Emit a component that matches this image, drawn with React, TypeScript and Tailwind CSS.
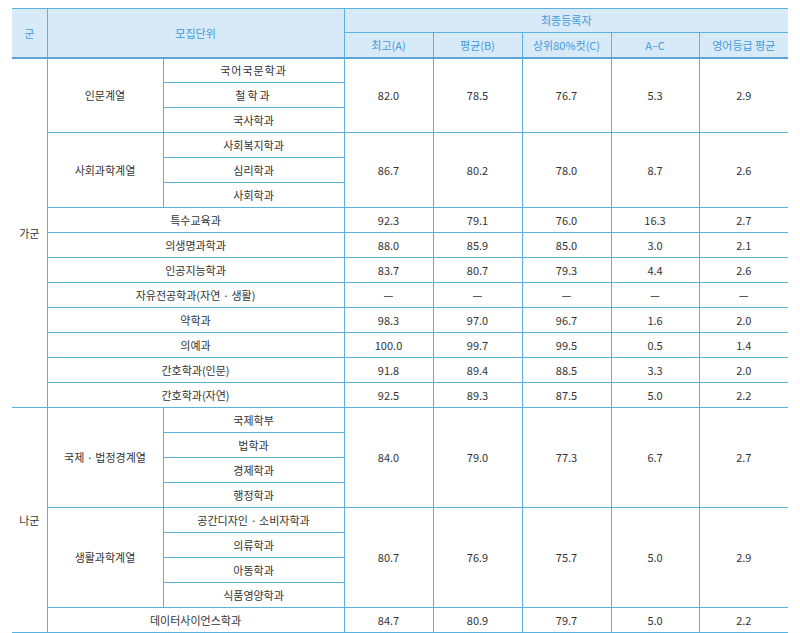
import React from "react";

type Sub = { name: string; track?: string };
type Block =
  | { kind: "group"; label: string; subs: Sub[]; vals: string[] }
  | { kind: "single"; label: string; vals: string[] };

const ga: Block[] = [
  {
    kind: "group",
    label: "인문계열",
    subs: [{ name: "국어국문학과", track: "tracking-[1px]" }, { name: "철학과", track: "tracking-[2px]" }, { name: "국사학과" }],
    vals: ["82.0", "78.5", "76.7", "5.3", "2.9"],
  },
  {
    kind: "group",
    label: "사회과학계열",
    subs: [{ name: "사회복지학과" }, { name: "심리학과" }, { name: "사회학과" }],
    vals: ["86.7", "80.2", "78.0", "8.7", "2.6"],
  },
  { kind: "single", label: "특수교육과", vals: ["92.3", "79.1", "76.0", "16.3", "2.7"] },
  { kind: "single", label: "의생명과학과", vals: ["88.0", "85.9", "85.0", "3.0", "2.1"] },
  { kind: "single", label: "인공지능학과", vals: ["83.7", "80.7", "79.3", "4.4", "2.6"] },
  { kind: "single", label: "자유전공학과(자연 · 생활)", vals: ["—", "—", "—", "—", "—"] },
  { kind: "single", label: "약학과", vals: ["98.3", "97.0", "96.7", "1.6", "2.0"] },
  { kind: "single", label: "의예과", vals: ["100.0", "99.7", "99.5", "0.5", "1.4"] },
  { kind: "single", label: "간호학과(인문)", vals: ["91.8", "89.4", "88.5", "3.3", "2.0"] },
  { kind: "single", label: "간호학과(자연)", vals: ["92.5", "89.3", "87.5", "5.0", "2.2"] },
];

const na: Block[] = [
  {
    kind: "group",
    label: "국제 · 법정경계열",
    subs: [{ name: "국제학부" }, { name: "법학과" }, { name: "경제학과" }, { name: "행정학과" }],
    vals: ["84.0", "79.0", "77.3", "6.7", "2.7"],
  },
  {
    kind: "group",
    label: "생활과학계열",
    subs: [{ name: "공간디자인 · 소비자학과" }, { name: "의류학과" }, { name: "아동학과" }, { name: "식품영양학과" }],
    vals: ["80.7", "76.9", "75.7", "5.0", "2.9"],
  },
  { kind: "single", label: "데이터사이언스학과", vals: ["84.7", "80.9", "79.7", "5.0", "2.2"] },
];

const da: Block[] = [
  {
    kind: "group",
    label: "",
    subs: [{ name: "" }, { name: "" }],
    vals: ["", "", "", "", ""],
  },
];

const cell = "border-b border-l border-[#5ab2e0] text-center align-middle p-0";

function rowsFor(groupLabel: string, blocks: Block[], key: string) {
  const total = blocks.reduce((n, b) => n + (b.kind === "group" ? b.subs.length : 1), 0);
  const out: React.ReactNode[] = [];
  let first = true;
  blocks.forEach((b, bi) => {
    if (b.kind === "group") {
      b.subs.forEach((s, si) => {
        out.push(
          <tr key={`${key}-${bi}-${si}`} className="h-[25px]">
            {first && (
              <td rowSpan={total} className="border-b border-[#5ab2e0] text-center align-middle p-0">
                {groupLabel}
              </td>
            )}
            {si === 0 && (
              <td rowSpan={b.subs.length} className={cell}>
                {b.label}
              </td>
            )}
            <td className={`${cell} ${s.track ?? ""}`}>{s.name}</td>
            {si === 0 &&
              b.vals.map((v, vi) => (
                <td key={vi} rowSpan={b.subs.length} className={cell}>
                  {v}
                </td>
              ))}
          </tr>
        );
        first = false;
      });
    } else {
      out.push(
        <tr key={`${key}-${bi}`} className="h-[25px]">
          {first && (
            <td rowSpan={total} className="border-b border-[#5ab2e0] text-center align-middle p-0">
              {groupLabel}
            </td>
          )}
          <td colSpan={2} className={cell}>
            {b.label}
          </td>
          {b.vals.map((v, vi) => (
            <td key={vi} className={cell}>
              {v}
            </td>
          ))}
        </tr>
      );
      first = false;
    }
  });
  return out;
}

export default function App() {
  const th = "text-center align-middle p-0 font-normal";
  return (
    <div className="bg-white min-h-screen pt-[8px] pl-[12px] font-['Noto_Sans_CJK_KR',sans-serif] text-[11px] text-[#333333]">
      <table className="table-fixed border-collapse w-[776px]">
        <colgroup>
          <col className="w-[35px]" />
          <col className="w-[116px]" />
          <col className="w-[181px]" />
          <col className="w-[89px]" />
          <col className="w-[89px]" />
          <col className="w-[89px]" />
          <col className="w-[88px]" />
          <col className="w-[89px]" />
        </colgroup>
        <thead className="bg-[#d8eaf8] text-[#3d9bdc]">
          <tr className="h-[24px]">
            <th rowSpan={2} className={`${th} border-t border-[#5ab2e0] border-b-2 border-b-[#5aa4d8]`}>
              군
            </th>
            <th rowSpan={2} colSpan={2} className={`${th} border-t border-l border-[#5ab2e0] border-b-2 border-b-[#5aa4d8]`}>
              모집단위
            </th>
            <th colSpan={5} className={`${th} border-t border-l border-b border-[#5ab2e0]`}>
              최종등록자
            </th>
          </tr>
          <tr className="h-[25px]">
            {["최고(A)", "평균(B)", "상위80%컷(C)", "A–C", "영어등급 평균"].map((h) => (
              <th key={h} className={`${th} border-l border-[#5ab2e0] border-b-2 border-b-[#5aa4d8]`}>
                {h}
              </th>
            ))}
          </tr>
        </thead>
        <tbody>
          {rowsFor("가군", ga, "ga")}
          {rowsFor("나군", na, "na")}
          {rowsFor("", da, "da")}
        </tbody>
      </table>
    </div>
  );
}
